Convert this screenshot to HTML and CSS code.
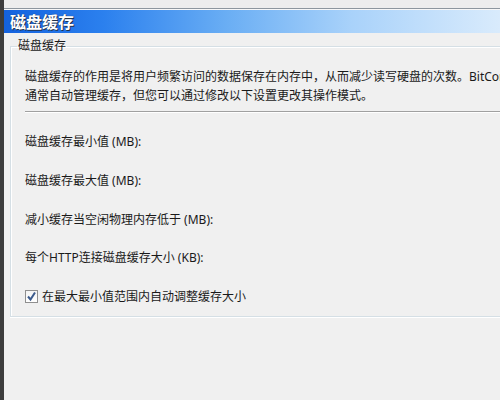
FILE: index.html
```html
<!DOCTYPE html>
<html lang="zh-CN">
<head>
<meta charset="utf-8">
<title>磁盘缓存</title>
<link rel="stylesheet" href="styles.css">
</head>
<body>
<div class="page">
  <div class="strip"></div>
  <div class="main">
    <div class="topband"></div>
    <div class="titlebar"><span class="title">磁盘缓存</span></div>
    <fieldset class="group">
      <legend class="legend">磁盘缓存</legend>
      <div class="inner">
        <p class="desc">磁盘缓存的作用是将用户频繁访问的数据保存在内存中，从而减少读写硬盘的次数。BitComet<br>通常自动管理缓存，但您可以通过修改以下设置更改其操作模式。</p>
        <div class="sep"></div>
        <div class="rows">
          <div class="row">磁盘缓存最小值 (MB):</div>
          <div class="row">磁盘缓存最大值 (MB):</div>
          <div class="row">减小缓存当空闲物理内存低于 (MB):</div>
          <div class="row">每个HTTP连接磁盘缓存大小 (KB):</div>
          <label class="row check">
            <span class="box"><svg width="11" height="11" viewBox="0 0 11 11"><path d="M2 5.5 L4.5 8.5 L9 1.5" fill="none" stroke="#3b5a8c" stroke-width="2"/></svg></span>
            在最大最小值范围内自动调整缓存大小
          </label>
        </div>
      </div>
    </fieldset>
  </div>
</div>
</body>
</html>
```
FILE: styles.css
```css
html, body {
  margin: 0;
  padding: 0;
  background: #f0f0f0;
}
.page {
  display: flex;
  width: 500px;
  height: 400px;
  overflow: hidden;
  font-family: "Noto Sans", "Noto Sans CJK SC", sans-serif;
  font-size: 12px;
  color: #1a1a1a;
}
.strip {
  width: 4px;
  flex: none;
  background: #3d3d3d;
}
.main {
  flex: 1;
  min-width: 0;
  display: flex;
  flex-direction: column;
}
.topband {
  height: 8px;
  background: #ededed;
  border-bottom: 1px solid #8d969e;
  box-shadow: 0 1px 0 #f7f7f7;
  margin-bottom: 1px;
}
.titlebar {
  height: 23px;
  display: flex;
  align-items: center;
  padding-left: 6px;
  background: linear-gradient(to right, #1462de 0%, #2b80ee 20%, #6aaef4 45%, #a9d2fa 70%, #d9ebfc 100%);
}
.title {
  font-family: "Noto Sans CJK SC", sans-serif;
  font-weight: bold;
  font-size: 16px;
  line-height: 23px;
  color: #ffffff;
  text-shadow: 1px 1px 0 #22334d, 0 0 1px #22334d;
}
.group {
  margin: 5px -30px 0 6px;
  padding: 0 0 10px 0;
  border: 1px solid #d5dfe5;
  box-shadow: inset 1px 1px 0 #ffffff, 0 1px 0 #ffffff;
  min-width: 0;
}
.legend {
  margin-left: 6px;
  padding: 0 1px;
  line-height: 16px;
}
.inner {
  padding-left: 14px;
}
.desc {
  margin: 13px 0 0 0;
  line-height: 19px;
  white-space: nowrap;
}
.sep {
  margin-top: 6px;
  height: 1px;
  background: #a0a0a0;
  box-shadow: 0 1px 0 #ffffff;
}
.rows {
  display: flex;
  flex-direction: column;
  gap: 20px;
  margin-top: 20px;
}
.row {
  line-height: 19px;
  height: 19px;
}
.row:nth-child(4) {
  margin-top: -1px;
}
.check {
  display: flex;
  align-items: center;
  gap: 4px;
}
.box {
  width: 11px;
  height: 11px;
  border: 1px solid #8f8f8f;
  background: linear-gradient(#f4f4f4, #ffffff);
  display: flex;
  align-items: center;
  justify-content: center;
}
```
